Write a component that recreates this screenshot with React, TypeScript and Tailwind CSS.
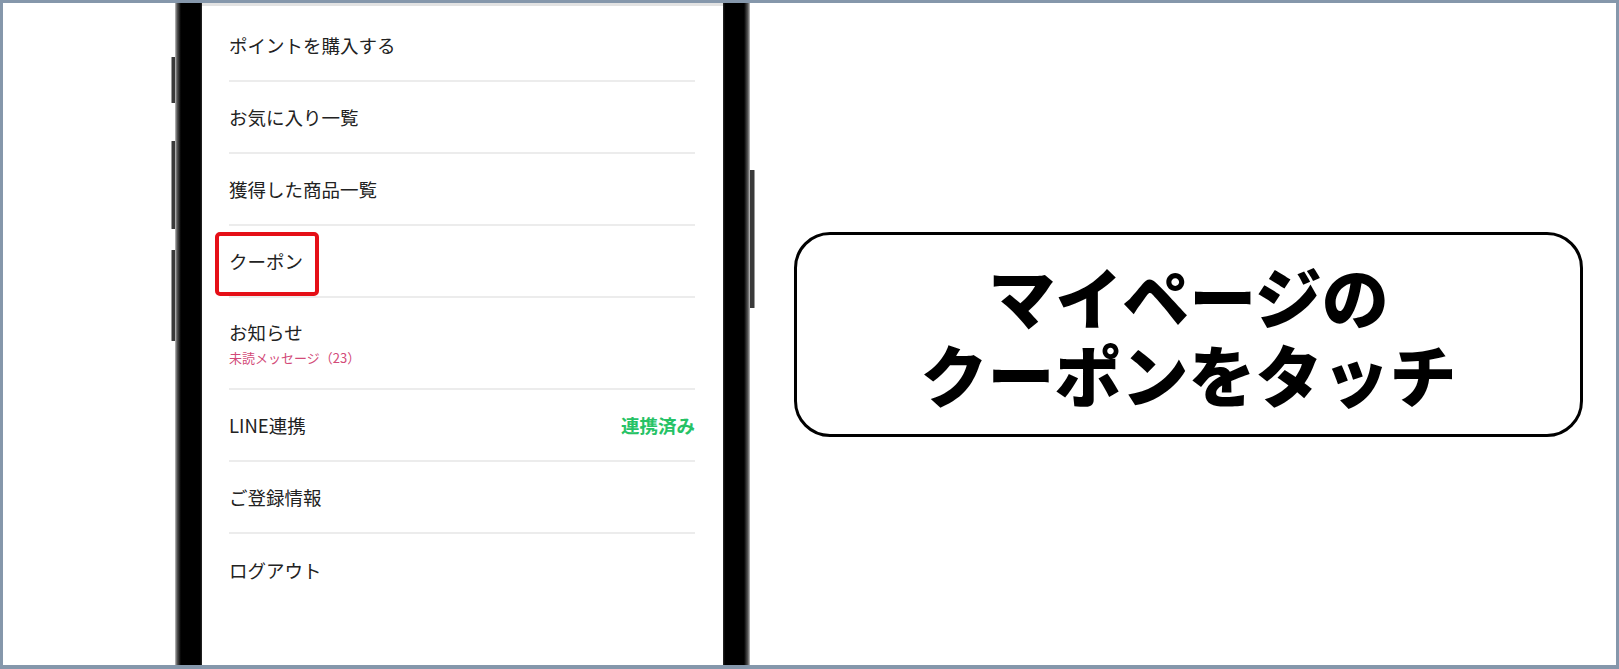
import React from "react";

const rows = [
  { label: "ポイントを購入する" },
  { label: "お気に入り一覧" },
  { label: "獲得した商品一覧" },
  { label: "クーポン", marked: true },
  { label: "お知らせ", sub: "未読メッセージ（23）" },
  { label: "LINE連携", right: "連携済み" },
  { label: "ご登録情報" },
  { label: "ログアウト", last: true },
];

function MenuRow({ row }: { row: (typeof rows)[number] }) {
  const h = row.sub ? "h-[92px]" : "h-[72px]";
  return (
    <div
      className={`relative flex items-center justify-between ${h} ${
        row.last ? "" : "border-b-2 border-[#ececec]"
      }`}
    >
      <div className="flex flex-col gap-[5px]">
        <span className="text-[18.5px] leading-[24px] text-[#222]">{row.label}</span>
        {row.sub && (
          <span className="text-[13px] leading-[18px] text-[#d24a78]">{row.sub}</span>
        )}
      </div>
      {row.right && (
        <span className="text-[18.5px] leading-[24px] font-bold text-[#26c265]">
          {row.right}
        </span>
      )}
      {/* red highlight round the coupon entry */}
      {row.marked && (
        <div className="absolute left-[-14px] top-[6px] w-[104px] h-[64px] border-[4.5px] border-[#e50f17] rounded-[5px]"></div>
      )}
    </div>
  );
}

function Phone() {
  return (
    <div className="flex h-full">
      {/* left side buttons */}
      <div className="flex flex-col w-[4px]">
        <div className="mt-[54px] h-[46px] bg-[#3a3a3a] border-l border-[#9a9a9a] rounded-l-[1px]"></div>
        <div className="mt-[38px] h-[88px] bg-[#3a3a3a] border-l border-[#9a9a9a] rounded-l-[1px]"></div>
        <div className="mt-[21px] h-[91px] bg-[#3a3a3a] border-l border-[#9a9a9a] rounded-l-[1px]"></div>
      </div>

      {/* frame left */}
      <div className="w-[27px] h-full bg-[linear-gradient(to_right,#c4c4c4_0px,#5a5a5a_2px,#151515_5px,#000_6px,#000_25px,#2a2a2a_27px)]"></div>

      {/* screen */}
      <div className="w-[521px] h-full bg-white border-t-[3px] border-[#e2e2e2] pt-[4px] pl-[27px] pr-[28px] flex flex-col">
        {rows.map((r) => (
          <MenuRow key={r.label} row={r} />
        ))}
      </div>

      {/* frame right */}
      <div className="w-[27px] h-full bg-[linear-gradient(to_left,#c4c4c4_0px,#5a5a5a_2px,#151515_5px,#000_6px,#000_25px,#2a2a2a_27px)]"></div>

      {/* right side button */}
      <div className="flex flex-col w-[5px]">
        <div className="mt-[167px] h-[138px] bg-[#3a3a3a] border-r border-[#9a9a9a] rounded-r-[1px]"></div>
      </div>
    </div>
  );
}

export default function App() {
  return (
    <div className="w-[1619px] h-[669px] overflow-hidden bg-white border-[#8597ab] border-x-[3px] border-t-[3px] border-b-4 flex items-center font-['Noto_Sans_CJK_JP','Noto_Sans',sans-serif]">
      <div className="ml-[168px] h-full">
        <Phone />
      </div>

      <div className="ml-[39px] w-[789px] h-[205px] border-[3px] border-black rounded-[36px] flex items-center justify-center">
        <p className="text-[67px] leading-[78px] font-black text-black text-center">
          マイページの
          <br />
          クーポンをタッチ
        </p>
      </div>
    </div>
  );
}
